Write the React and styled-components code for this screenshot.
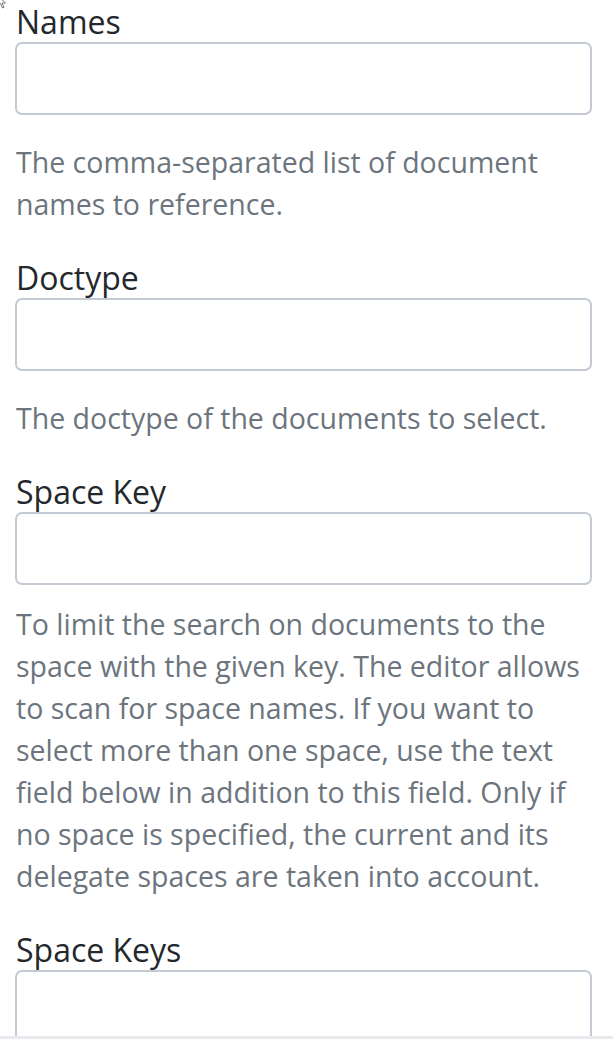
import styled, { createGlobalStyle } from "styled-components";

const GlobalStyle = createGlobalStyle`
  html, body {
    margin: 0;
    padding: 0;
    background: #fff;
  }
  body {
    font-family: "Open Sans", "Noto Sans", sans-serif;
  }
`;

const Viewport = styled.div`
  position: relative;
  width: 613px;
  height: 1036px;
  overflow: hidden;
  background: #fff;
`;

const BottomEdge = styled.div`
  width: 613px;
  height: 3px;
  background: #e8eaee;
`;

const Cursor = styled.svg`
  position: absolute;
  left: -3px;
  top: -5px;
`;

const Form = styled.form`
  padding: 1px 21px 0 15px;
`;

const Group = styled.div`
  margin-bottom: 32px;
`;

const Label = styled.label`
  display: block;
  padding-left: 1px;
  font-size: 32px;
  line-height: 41px;
  color: #24282c;
`;

const Input = styled.input`
  display: block;
  box-sizing: border-box;
  width: 577px;
  height: 73px;
  margin: 0;
  border: 2.5px solid #c4cad3;
  border-radius: 7px;
  background: #fff;
  font: inherit;
`;

const Help = styled.div`
  margin-top: ${(p) => (p.$tight ? "18px" : "26px")};
  padding-left: 1px;
  font-size: 28.5px;
  line-height: 42px;
  color: #6c757d;
`;

const Line = styled.span`
  display: block;
  white-space: nowrap;
`;

const fields = [
  {
    label: "Names",
    help: ["The comma-separated list of document", "names to reference."],
  },
  { label: "Doctype", help: ["The doctype of the documents to select."] },
  {
    label: "Space Key",
    tight: true,
    help: [
      "To limit the search on documents to the",
      "space with the given key. The editor allows",
      "to scan for space names. If you want to",
      "select more than one space, use the text",
      "field below in addition to this field. Only if",
      "no space is specified, the current and its",
      "delegate spaces are taken into account.",
    ],
  },
  { label: "Space Keys" },
];

export default function App() {
  return (
    <>
      <GlobalStyle />
      <Viewport>
        <Form>
          {fields.map((f) => (
            <Group key={f.label}>
              <Label>{f.label}</Label>
              <Input type="text" />
              {f.help && (
                <Help $tight={f.tight}>
                  {f.help.map((l) => (
                    <Line key={l}>{l}</Line>
                  ))}
                </Help>
              )}
            </Group>
          ))}
        </Form>
        <Cursor width="12" height="14" viewBox="0 0 12 14">
          <path d="M1 1 L1 11 L3.5 8.5 L5.5 13 L7 12.3 L5 8 L8.5 8 Z" fill="#fff" stroke="#555" strokeWidth="0.8" />
        </Cursor>
      </Viewport>
      <BottomEdge />
    </>
  );
}
